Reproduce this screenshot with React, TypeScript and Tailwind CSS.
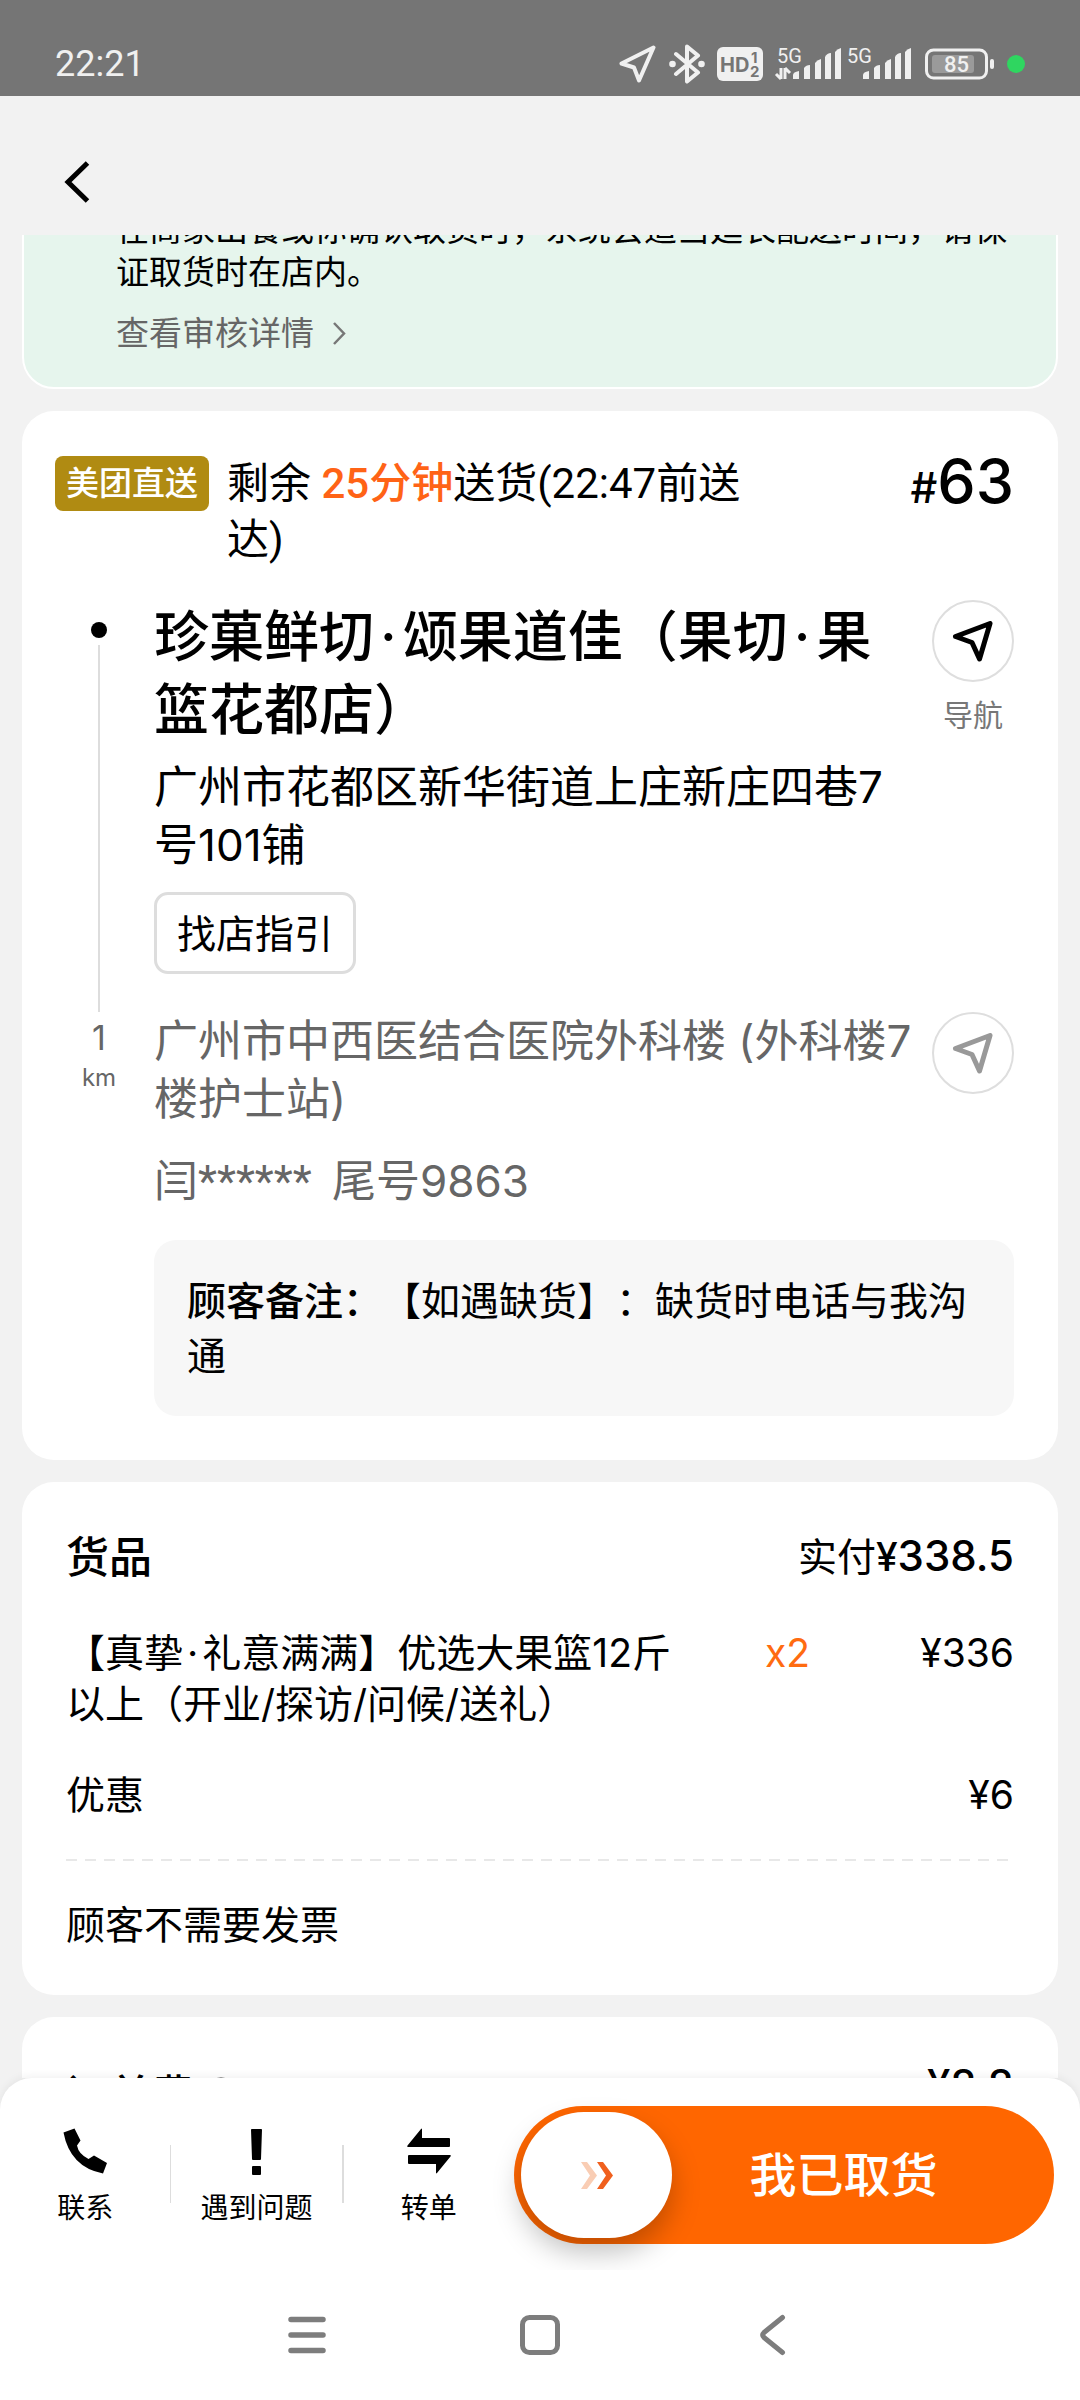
import React from "react";

function SignalBars() {
  return (
    <g fill="#f0f0f0">
      <path d="M18 31v-4q0-3 6-4v8z" />
      <path d="M29 31V20q2-3 6-3v14z" />
      <path d="M40 31V15q2-3 6-4v20z" />
      <path d="M50 31V9q2-4 6-4v26z" />
      <path d="M60 31V4q2-3 6-4v31z" />
    </g>
  );
}

function StatusBar() {
  return (
    <div className="flex h-24 shrink-0 items-center bg-[#757575] pt-[31px] pr-[55px] pl-[55px] text-[#f0f0f0]">
      <span className="flex-1 font-['Roboto','Noto_Sans_CJK_SC',sans-serif] text-[36px] leading-10">22:21</span>
      <svg width="37" height="38" viewBox="0 0 37 38" className="mr-[13px]" fill="none" stroke="#f0f0f0" strokeWidth="4" strokeLinejoin="round">
        <path d="M34.5 2.5 2.5 18.5 15 22.5 20 35.5Z" />
      </svg>
      <svg width="36" height="40" viewBox="0 0 36 40" className="mr-3" fill="none" stroke="#f0f0f0" strokeWidth="4" strokeLinejoin="round" strokeLinecap="round">
        <path d="M7 10 29 28.5 18 37.5V2.5L29 11.5 7 30" />
        <circle cx="3.5" cy="20" r="3.3" fill="#f0f0f0" stroke="none" />
        <circle cx="32.5" cy="20" r="3.3" fill="#f0f0f0" stroke="none" />
      </svg>
      <svg width="46" height="34" viewBox="0 0 46 34" className="mr-3">
        <rect width="46" height="34" rx="6" fill="#f0f0f0" />
        <g fill="#757575" fontFamily="Inter, sans-serif" fontWeight="700">
          <text x="3" y="24.5" fontSize="20">HD</text>
          <text x="34" y="15.5" fontSize="15">1</text>
          <text x="33" y="30" fontSize="15">2</text>
        </g>
      </svg>
      <svg width="66" height="32" viewBox="0 0 66 32" className="mr-1 overflow-visible">
        <SignalBars />
        <text x="2" y="15" fontSize="20" fill="#f0f0f0" fontFamily="Roboto, sans-serif">5G</text>
        <path d="M6 20v11M6 31 1 26M10 31V20M10 20l5 5" stroke="#f0f0f0" strokeWidth="3" fill="none" />
      </svg>
      <svg width="66" height="32" viewBox="0 0 66 32" className="mr-[14px] overflow-visible">
        <SignalBars />
        <text x="2" y="15" fontSize="20" fill="#f0f0f0" fontFamily="Roboto, sans-serif">5G</text>
      </svg>
      <svg width="69" height="32" viewBox="0 0 69 32" className="mr-[13px]">
        <rect x="1.5" y="2" width="60" height="28" rx="7" fill="none" stroke="#f0f0f0" strokeWidth="3" />
        <rect x="7" y="7" width="42" height="18" rx="3" fill="#9a9a9a" />
        <rect x="65" y="11" width="4" height="10" rx="2" fill="#f0f0f0" />
        <text x="31.5" y="23.5" fontSize="22" textAnchor="middle" fill="#f0f0f0" fontFamily="Roboto, sans-serif" fontWeight="500">85</text>
      </svg>
      <span className="h-[18px] w-[18px] rounded-full bg-[#2fd660]" />
    </div>
  );
}

function NavArrow({ className }: { className: string }) {
  return (
    <svg width="42" height="42" viewBox="0 0 42 42" fill="none" strokeWidth="5" strokeLinejoin="round" className={className}>
      <path d="M38 3.500 3.500 16.500 20 22.500 27.500 39Z" />
    </svg>
  );
}

function NavButton({ label, muted }: { label?: string; muted?: boolean }) {
  return (
    <button type="button" aria-label="导航" className="flex shrink-0 flex-col items-center self-start">
      <span className="flex h-[82px] w-[82px] items-center justify-center rounded-full border-2 border-[#dedede]">
        <NavArrow className={muted ? "stroke-[#999999]" : "stroke-black"} />
      </span>
      {label && <span className="mt-[13px] text-[30px] leading-10 text-[#777777]">{label}</span>}
    </button>
  );
}

function Notice() {
  return (
    <section className="-mt-[60px] rounded-[32px] border-2 border-white bg-[#e6f5ed] pt-[31px] pr-[38px] pb-8 pl-[92px]">
      <p className="text-[33px] leading-[43px]">
        在商家出餐或你确认取货时，系统会适当延长配送时间，请保证取货时在店内。
      </p>
      <a href="#review" className="mt-[17px] flex items-center gap-[19px] text-[33px] leading-[44px] text-[#666666]">
        查看审核详情
        <svg width="13" height="23" viewBox="0 0 13 23" fill="none" stroke="#777777" strokeWidth="2.500">
          <path d="M1 1 11 11.500 1 22" />
        </svg>
      </a>
    </section>
  );
}

function OrderCard() {
  return (
    <section className="rounded-[32px] bg-white pt-[45px] pr-[44px] pb-[44px] pl-[33px]">
      <div className="flex items-start">
        <span className="shrink-0 rounded-lg bg-[#b08b12] px-[11px] text-[33px] leading-[55px] font-medium text-white">美团直送</span>
        <p className="mr-[140px] ml-[18px] flex-1 font-['Roboto','Noto_Sans_CJK_SC',sans-serif] text-[42px] leading-[56px]">
          剩余 <span className="font-medium text-[#ff6316]">25分钟</span>送货(22:47前送达)
        </p>
        <span className="shrink-0 text-[42px] leading-[50px] font-medium">
          #<span className="text-[61px]">63</span>
        </span>
      </div>

      <div className="mt-8 flex">
        <div className="mr-[11px] flex w-[88px] shrink-0 flex-col items-center pt-[22px]">
          <span className="h-4 w-4 rounded-full bg-black" />
          <span className="mt-[7px] w-0.5 flex-1 bg-[#dddddd]" />
        </div>
        <div className="mr-5 flex-1 pb-[38px]">
          <h1 className="text-[55px] leading-[73px] font-medium">
            珍菓鲜切<span className="px-1.5">·</span>颂果道佳（果切<span className="px-1.5">·</span>果篮花都店）
          </h1>
          <p className="mt-3 text-[44px] leading-[58px]">广州市花都区新华街道上庄新庄四巷7号101铺</p>
          <button type="button" className="mt-[18px] flex h-[82px] items-center rounded-[14px] border-[3px] border-[#dddddd] px-5 text-[39px] leading-[55px]">
            找店指引
          </button>
        </div>
        <NavButton label="导航" />
      </div>

      <div className="flex">
        <div className="mr-[11px] flex w-[88px] shrink-0 flex-col items-center text-[#666666]">
          <span className="text-[34px] leading-[52px]">1</span>
          <span className="text-[24px] leading-7">km</span>
        </div>
        <div className="mr-5 flex-1 text-[44px] leading-[58px] text-[#666666]">
          <p>广州市中西医结合医院外科楼 (外科楼7楼护士站)</p>
          <p className="mt-6">
            闫<span className="mr-2 font-['Roboto',sans-serif]">******</span> 尾号9863
          </p>
        </div>
        <NavButton muted />
      </div>

      <p className="mt-[29px] ml-[99px] rounded-[22px] bg-[#f7f7f7] p-[33px] text-[39px] leading-[55px]">
        <span className="font-medium">顾客备注：</span>【如遇缺货】：缺货时电话与我沟通
      </p>
    </section>
  );
}

function GoodsCard() {
  return (
    <section className="rounded-[32px] bg-white px-[44px] pt-[44px] pb-[45px] text-[39px] leading-[51px]">
      <div className="flex items-center justify-between leading-[60px]">
        <h2 className="text-[43px] font-medium">货品</h2>
        <p>
          实付<span className="font-medium">¥<span className="text-[42px]">338.5</span></span>
        </p>
      </div>
      <table className="mt-10 w-full table-fixed text-left">
        <tbody className="align-top">
          <tr>
            <th scope="row" className="w-[65%] p-0 font-normal">
              【真挚<span className="px-1">·</span>礼意满满】优选大果篮12斤以上（开业/探访/问候/送礼）
            </th>
            <td className="w-[13.5%] p-0 text-right text-[#ff6b10]">x2</td>
            <td className="p-0 text-right">¥336</td>
          </tr>
          <tr>
            <th scope="row" className="pt-10 font-normal">优惠</th>
            <td />
            <td className="pt-10 text-right">¥6</td>
          </tr>
        </tbody>
      </table>
      <svg width="100%" height="2" className="mt-[39px] block">
        <line x1="0" y1="1" x2="100%" y2="1" stroke="#e8e8e8" strokeWidth="2" strokeDasharray="11 8" />
      </svg>
      <p className="mt-[38px]">顾客不需要发票</p>
    </section>
  );
}

function FeeCard() {
  return (
    <section className="rounded-[32px] bg-white px-[44px] pt-[44px] pb-[44px]">
      <div className="flex items-start justify-between">
        <h2 className="flex items-center gap-2 text-[43px] leading-[68px] font-medium">
          订单费
          <svg width="36" height="36" viewBox="0 0 36 36" fill="none" stroke="#333333" strokeWidth="3">
            <circle cx="18" cy="18" r="16" />
          </svg>
        </h2>
        <span className="text-[42px] leading-[48px] font-medium">¥8.8</span>
      </div>
    </section>
  );
}

function Action({ label, children }: { label: string; children: React.ReactNode }) {
  return (
    <button type="button" className="flex flex-1 flex-col items-center pt-[22px] text-[28px] leading-[34px] whitespace-nowrap">
      <svg width="46" height="46" viewBox="0 0 46 46" fill="black" className="mb-[17px] overflow-visible">
        {children}
      </svg>
      {label}
    </button>
  );
}

function ActionBar() {
  return (
    <footer className="relative flex shrink-0 rounded-t-[32px] bg-white pt-7 pb-[26px] shadow-[0_-2px_8px_rgba(0,0,0,0.06)]">
      <div className="flex flex-1">
        <Action label="联系">
          <path d="M1.500 4.500 12.500 0.500 18.500 12.500 15 17.500Q16.500 26 26.500 31L32 27.500 45 35 41 45.500Q8 39 1.500 4.500Z" />
        </Action>
        <span className="mt-[39px] h-[58px] w-px bg-[#dddddd]" />
        <Action label="遇到问题">
          <path d="M18 1.500Q18 1 19 1H28Q29 1 29 1.500L28 31Q28 32 27 32H20Q19 32 19 31Z" />
          <rect x="19" y="38" width="9" height="9" rx="1" />
        </Action>
        <span className="mt-[39px] h-[58px] w-0.5 bg-[#dddddd]" />
        <Action label="转单">
          <path d="M16 0.500V10H43Q44 10 44 11V18Q44 19 43 19H1.500Q1 18 1.500 17.500L15 1Z" />
          <path d="M30 45.500V36H3Q2 36 2 35V28Q2 27 3 27H44.500Q45 28 44.500 28.500L31 45Z" />
        </Action>
      </div>
      <button type="button" className="mr-[26px] flex h-[138px] w-1/2 items-center rounded-full bg-[#ff6600] p-[7px] text-white">
        <span className="flex h-[126px] w-[151px] shrink-0 items-center justify-center rounded-full bg-white shadow-[0_14px_28px_rgba(0,0,0,0.25)]">
          <svg width="32" height="27" viewBox="0 0 32 27">
            <path d="M0 0h6l10 13.500L6 27H0l9-13.500z" fill="#f9cdb4" />
            <path d="M16 0h6l10 13.500L22 27h-6l9-13.500z" fill="#f0601e" />
          </svg>
        </span>
        <span className="flex-1 pr-8 text-center text-[47px] leading-[60px] font-medium">我已取货</span>
      </button>
    </footer>
  );
}

function SystemNav() {
  return (
    <nav className="relative flex h-[130px] shrink-0 items-center justify-center bg-white">
      <button type="button" aria-label="最近任务" className="flex w-[233px] justify-center">
        <svg width="40" height="42" viewBox="0 0 40 42" stroke="#7d7d7d" strokeWidth="5.500" strokeLinecap="round">
          <path d="M4 5.500H36M4 21H36M4 36.500H36" />
        </svg>
      </button>
      <button type="button" aria-label="主屏幕" className="flex w-[233px] justify-center">
        <svg width="42" height="42" viewBox="0 0 42 42" fill="none" stroke="#7d7d7d" strokeWidth="5">
          <rect x="3.500" y="3.500" width="35" height="35" rx="7" />
        </svg>
      </button>
      <button type="button" aria-label="返回" className="flex w-[233px] justify-center">
        <svg width="26" height="42" viewBox="0 0 26 42" fill="none" stroke="#7d7d7d" strokeWidth="5" strokeLinecap="round" strokeLinejoin="round">
          <path d="M22.500 3.500 4 18.500Q1.500 21 4 23.500L22.500 38.500" />
        </svg>
      </button>
    </nav>
  );
}

export default function App() {
  return (
    <div className="flex h-screen flex-col overflow-hidden bg-[#f2f2f2] font-['Inter','Noto_Sans_CJK_SC',sans-serif] text-black [text-spacing-trim:space-all]" lang="zh-CN">
      <StatusBar />
      <header className="flex h-[139px] shrink-0 items-center pt-[33px] pl-[64px]">
        <button type="button" aria-label="返回">
          <svg width="26" height="42" viewBox="0 0 26 42" fill="none" stroke="black" strokeWidth="5">
            <path d="M23.500 2 4 21 23.500 40" />
          </svg>
        </button>
      </header>
      <main className="flex min-h-0 flex-1 flex-col gap-[22px] overflow-hidden px-[22px] *:shrink-0">
        <Notice />
        <OrderCard />
        <GoodsCard />
        <FeeCard />
      </main>
      <ActionBar />
      <SystemNav />
    </div>
  );
}
